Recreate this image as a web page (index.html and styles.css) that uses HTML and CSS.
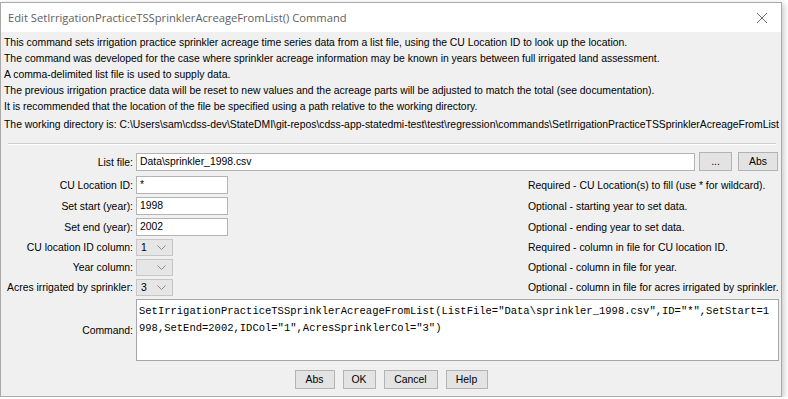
FILE: index.html
```html
<!DOCTYPE html>
<html lang="en">
<head>
    <meta charset="UTF-8">
    <title>Edit SetIrrigationPracticeTSSprinklerAcreageFromList() Command</title>
    <link rel="stylesheet" href="styles.css">
</head>
<body>
    <div class="window">
        <div class="titlebar">
            <span class="title">Edit SetIrrigationPracticeTSSprinklerAcreageFromList() Command</span>
            <svg class="close" width="12" height="12" viewBox="0 0 12 12">
                <path d="M1 1 L11 11 M11 1 L1 11" stroke="#6b6b6b" stroke-width="1" fill="none"/>
            </svg>
        </div>

        <div class="content">
            <div class="intro">
                <p>This command sets irrigation practice sprinkler acreage time series data from a list file, using the CU Location ID to look up the location.</p>
                <p>The command was developed for the case where sprinkler acreage information may be known in years between full irrigated land assessment.</p>
                <p>A comma-delimited list file is used to supply data.</p>
                <p>The previous irrigation practice data will be reset to new values and the acreage parts will be adjusted to match the total (see documentation).</p>
                <p>It is recommended that the location of the file be specified using a path relative to the working directory.</p>
                <p class="workdir">The working directory is: C:\Users\sam\cdss-dev\StateDMI\git-repos\cdss-app-statedmi-test\test\regression\commands\SetIrrigationPracticeTSSprinklerAcreageFromList</p>
            </div>

            <div class="separator"></div>

            <div class="form">
                <label class="lbl">List file:</label>
                <div class="file-row">
                    <div class="field grow">Data\sprinkler_1998.csv</div>
                    <button class="btn btn-browse">...</button>
                    <button class="btn btn-abs">Abs</button>
                </div>

                <label class="lbl">CU Location ID:</label>
                <div class="field short">*</div>
                <span class="note">Required - CU Location(s) to fill (use * for wildcard).</span>

                <label class="lbl">Set start (year):</label>
                <div class="field short">1998</div>
                <span class="note">Optional - starting year to set data.</span>

                <label class="lbl">Set end (year):</label>
                <div class="field short">2002</div>
                <span class="note">Optional - ending year to set data.</span>

                <label class="lbl">CU location ID column:</label>
                <div class="combo"><span>1</span><svg width="9" height="5" viewBox="0 0 9 5"><path d="M0.5 0.5 L4.5 4.5 L8.5 0.5" stroke="#8a8a8a" fill="none"/></svg></div>
                <span class="note">Required - column in file for CU location ID.</span>

                <label class="lbl">Year column:</label>
                <div class="combo"><span></span><svg width="9" height="5" viewBox="0 0 9 5"><path d="M0.5 0.5 L4.5 4.5 L8.5 0.5" stroke="#8a8a8a" fill="none"/></svg></div>
                <span class="note">Optional - column in file for year.</span>

                <label class="lbl">Acres irrigated by sprinkler:</label>
                <div class="combo"><span>3</span><svg width="9" height="5" viewBox="0 0 9 5"><path d="M0.5 0.5 L4.5 4.5 L8.5 0.5" stroke="#8a8a8a" fill="none"/></svg></div>
                <span class="note">Optional - column in file for acres irrigated by sprinkler.</span>

                <label class="lbl">Command:</label>
                <div class="command">SetIrrigationPracticeTSSprinklerAcreageFromList(ListFile="Data\sprinkler_1998.csv",ID="*",SetStart=1
998,SetEnd=2002,IDCol="1",AcresSprinklerCol="3")</div>
            </div>

            <div class="actions">
                <button class="btn btn-abs">Abs</button>
                <button class="btn btn-ok">OK</button>
                <button class="btn btn-cancel">Cancel</button>
                <button class="btn btn-help">Help</button>
            </div>
        </div>
    </div>
</body>
</html>
```

FILE: styles.css
```css
/* Swing dialog, Windows look and feel */
:root {
    --panel: #f0f0f0;
    --frame: #a9a9a9;
    --field-border: #b4b4b4;
    --button-bg: #e3e3e3;
    --button-border: #b3b3b3;
    --text: #000000;
}

body {
    margin: 0;
    background-color: #ffffff;
    font-family: "Liberation Sans", Arial, sans-serif;
    font-size: 10.4px;
    color: var(--text);
}

.window {
    width: 780px;
    height: 393px;
    margin-top: 2px;
    border: 1px solid var(--frame);
    background-color: var(--panel);
    box-shadow: 2px 2px 6px rgba(0, 0, 0, 0.22);
    display: flex;
    flex-direction: column;
}

.titlebar {
    height: 29px;
    background-color: #ffffff;
    display: flex;
    align-items: center;
    justify-content: space-between;
    padding: 0 13px 0 7px;
    flex-shrink: 0;
}

.title {
    font-family: "Open Sans", "Noto Sans", sans-serif;
    font-size: 11.2px;
    color: #606060;
}

.content {
    padding: 3px 1px 0 1px;
    display: flex;
    flex-direction: column;
}

.intro p {
    margin: 0 0 0 2px;
    height: 16px;
    line-height: 16px;
    white-space: nowrap;
}

.intro .workdir {
    margin-top: 2px;
}

.separator {
    margin: 10px 4px 7px 6px;
    border-top: 1px solid #d0d0d0;
    border-bottom: 1px solid #ffffff;
}

.form {
    display: grid;
    grid-template-columns: 130px 389px minmax(0, 1fr);
    column-gap: 3px;
    row-gap: 3px;
    align-items: center;
    padding-left: 1px;
}

.lbl {
    text-align: right;
    white-space: nowrap;
}

.note {
    white-space: nowrap;
}

.field {
    height: 18px;
    box-sizing: border-box;
    border: 1px solid var(--field-border);
    background-color: #ffffff;
    padding: 0 3px;
    line-height: 16px;
}

.field.short {
    width: 92px;
}

.file-row {
    grid-column: 2 / 4;
    display: flex;
    align-items: center;
    gap: 4px;
    margin-right: 2px;
    margin-bottom: 2px;
}

.file-row .grow {
    flex: 1;
}

.btn {
    height: 19px;
    box-sizing: border-box;
    border: 1px solid var(--button-border);
    background-color: var(--button-bg);
    font-family: "Liberation Sans", Arial, sans-serif;
    font-size: 10.4px;
    color: var(--text);
    padding: 0;
}

.btn-browse { width: 33px; margin-right: 2px; }
.btn-abs { width: 40px; }
.btn-ok { width: 33px; }
.btn-cancel { width: 54px; }
.btn-help { width: 42px; }

.combo {
    width: 37px;
    height: 17px;
    box-sizing: border-box;
    border: 1px solid #c6c6c6;
    background-color: #e6e6e6;
    display: flex;
    align-items: center;
    justify-content: space-between;
    padding: 0 6px 0 4px;
}

.command {
    grid-column: 2 / 4;
    height: 62px;
    box-sizing: border-box;
    border: 1px solid #a6a6a6;
    background-color: #ffffff;
    margin-right: 1px;
    padding: 3px 2px;
    font-family: "Liberation Mono", "Courier New", monospace;
    font-size: 10.5px;
    line-height: 17px;
    white-space: pre;
    overflow: hidden;
}

.actions {
    display: flex;
    justify-content: center;
    gap: 8px;
    margin-top: 9px;
}
```
